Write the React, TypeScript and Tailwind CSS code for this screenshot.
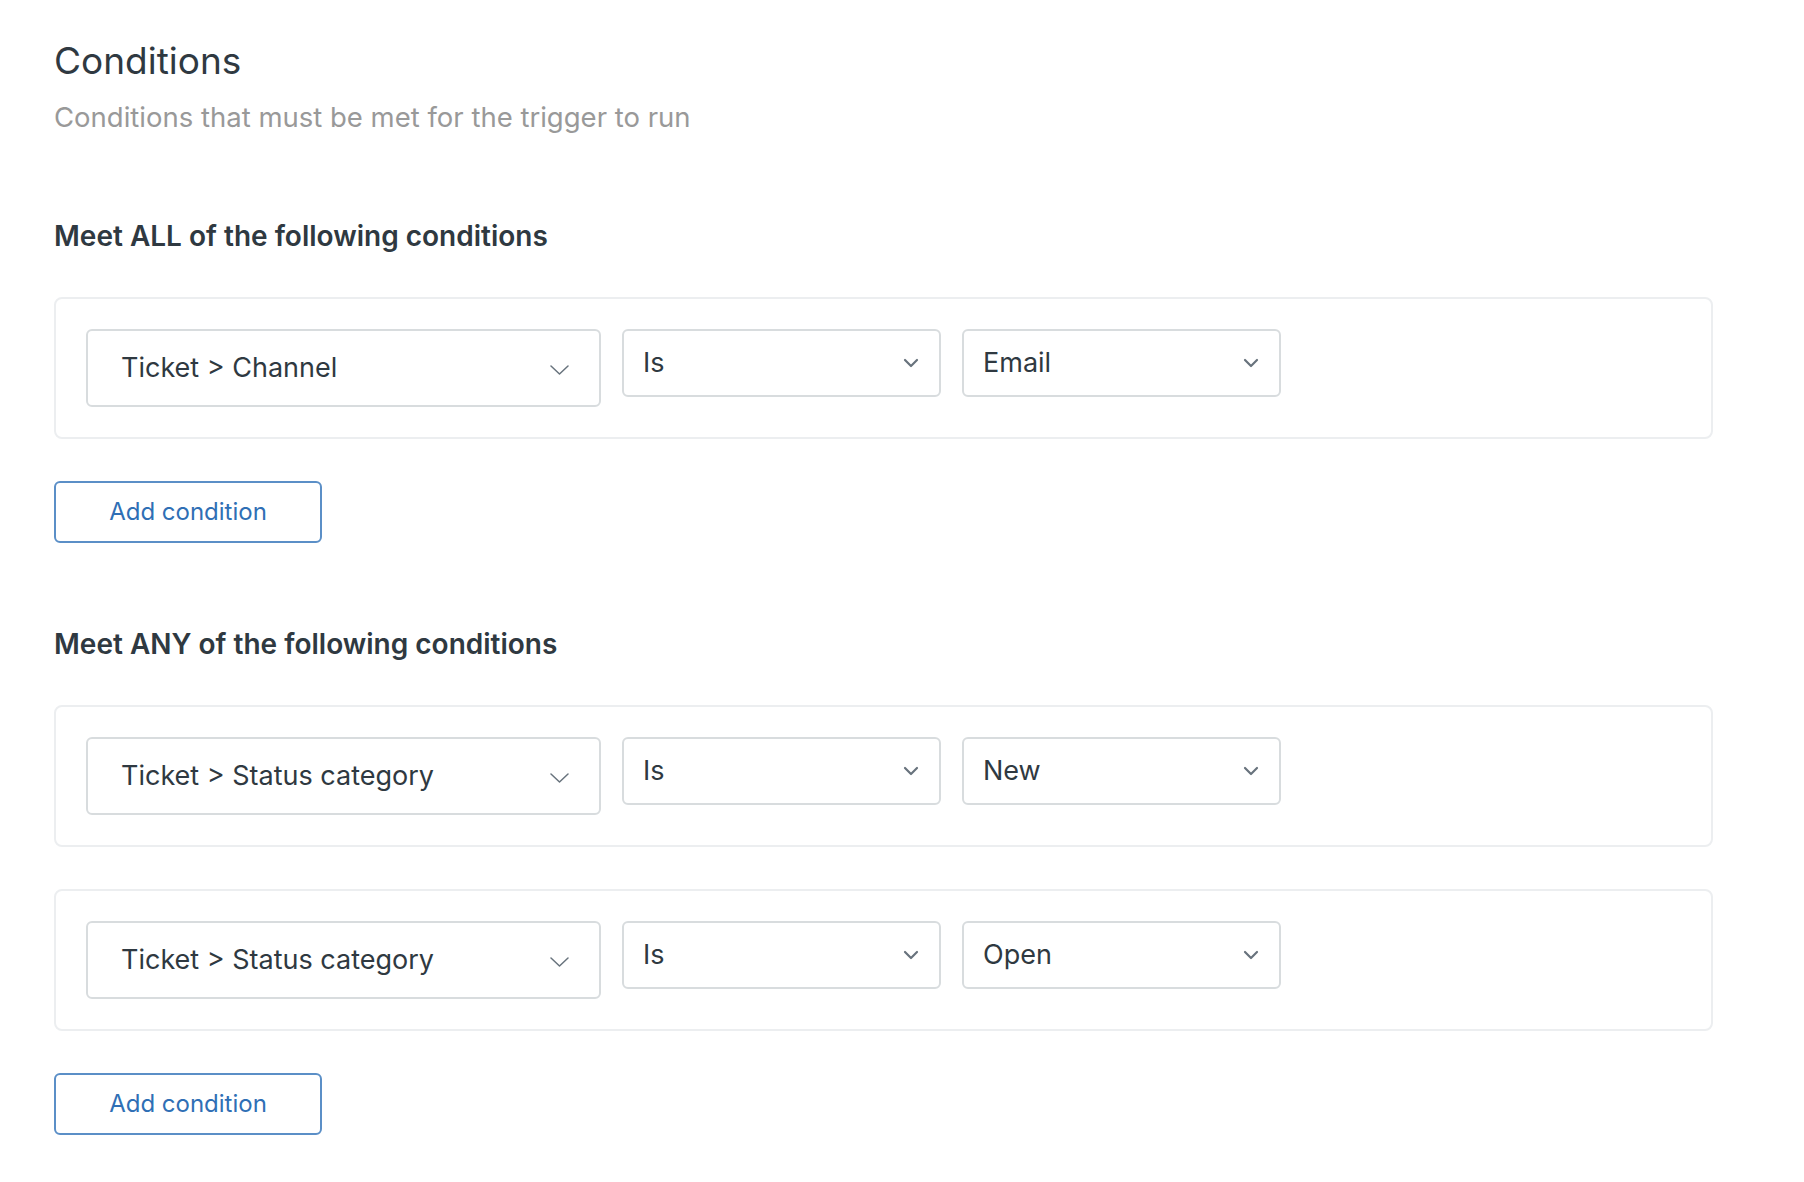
import React from 'react';

type Condition = { field: string; operator: string; value: string };

const ALL_CONDITIONS: Condition[] = [{ field: 'Ticket > Channel', operator: 'Is', value: 'Email' }];
const ANY_CONDITIONS: Condition[] = [
  { field: 'Ticket > Status category', operator: 'Is', value: 'New' },
  { field: 'Ticket > Status category', operator: 'Is', value: 'Open' },
];

function ThinChevron(): React.ReactElement {
  return (
    <svg width="19" height="10" viewBox="0 0 19 10" fill="none" className="shrink-0">
      <path d="M1 1l8.5 8L18 1" stroke="#68737d" strokeWidth="1.5" strokeLinecap="round" strokeLinejoin="round" />
    </svg>
  );
}

function SmallChevron(): React.ReactElement {
  return (
    <svg width="16" height="10" viewBox="0 0 16 10" fill="none" className="shrink-0">
      <path d="M2 2l6 6 6-6" stroke="#68737d" strokeWidth="2.2" strokeLinecap="round" strokeLinejoin="round" />
    </svg>
  );
}

function ConditionRow({ condition }: { condition: Condition }): React.ReactElement {
  return (
    <div className="w-[1659px] rounded-[8px] border-2 border-[#eceef0] bg-white p-[30px]">
      <div className="flex items-start gap-[21px]">
        <div className="flex h-[78px] w-[515px] items-center justify-between rounded-[6px] border-2 border-[#d8dcde] pl-[33px] pr-[30px]">
          <span className="text-[27px] text-[#2f3941]">{condition.field}</span>
          <span className="mt-[4px]">
            <ThinChevron />
          </span>
        </div>
        <div className="flex h-[68px] w-[319px] items-center justify-between rounded-[6px] border-2 border-[#d8dcde] pl-[19px] pr-[20px]">
          <span className="text-[27px] text-[#2f3941]">{condition.operator}</span>
          <SmallChevron />
        </div>
        <div className="flex h-[68px] w-[319px] items-center justify-between rounded-[6px] border-2 border-[#d8dcde] pl-[19px] pr-[20px]">
          <span className="text-[27px] text-[#2f3941]">{condition.value}</span>
          <SmallChevron />
        </div>
      </div>
    </div>
  );
}

function AddConditionButton(): React.ReactElement {
  return (
    <button
      type="button"
      className="flex h-[62px] w-[268px] items-center justify-center rounded-[6px] border-2 border-[#5b8fc7] bg-white text-[24px] text-[#2f6fb5]"
    >
      Add condition
    </button>
  );
}

export default function App(): React.ReactElement {
  return (
    <div className="min-h-screen bg-white pl-[54px] pt-[39px] font-['Inter',sans-serif]">
      <h1 className="text-[37px] leading-[44px] font-normal text-[#2f3941]">Conditions</h1>
      <p className="mt-[18px] text-[27.5px] leading-[32px] text-[#999999]">
        Conditions that must be met for the trigger to run
      </p>

      <h2 className="mt-[87px] text-[28px] leading-[32px] font-semibold text-[#2f3941]">
        Meet ALL of the following conditions
      </h2>
      <div className="mt-[45px] flex flex-col gap-[42px]">
        {ALL_CONDITIONS.map((c, i) => (
          <ConditionRow key={i} condition={c} />
        ))}
      </div>
      <div className="mt-[42px]">
        <AddConditionButton />
      </div>

      <h2 className="mt-[85px] text-[28px] leading-[32px] font-semibold text-[#2f3941]">
        Meet ANY of the following conditions
      </h2>
      <div className="mt-[45px] flex flex-col gap-[42px]">
        {ANY_CONDITIONS.map((c, i) => (
          <ConditionRow key={i} condition={c} />
        ))}
      </div>
      <div className="mt-[42px]">
        <AddConditionButton />
      </div>
    </div>
  );
}
